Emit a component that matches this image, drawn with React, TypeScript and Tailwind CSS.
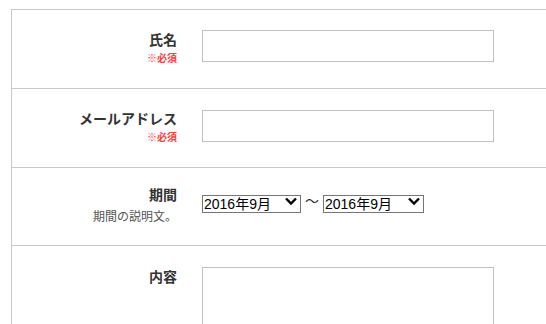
const SelectBox = ({ width }: { width: string }) => {
  return (
    <div className={`relative h-[18px] ${width}`}>
      <select className="h-full w-full appearance-none border border-[#767676] bg-white pl-[1px] text-[14px] leading-[16px] text-black outline-none">
        <option>2016年9月</option>
        <option>2016年10月</option>
      </select>
      <svg
        className="pointer-events-none absolute right-[4px] top-[5px]"
        width="12"
        height="9"
        viewBox="0 0 12 9"
        fill="none"
      >
        <path d="M1 1.5l5 5 5-5" stroke="#000" strokeWidth="2.4" />
      </svg>
    </div>
  );
};

const Label = ({ title, note, desc }: { title: string; note?: boolean; desc?: string }) => {
  return (
    <div className="w-[165px] shrink-0 text-right">
      <div className="text-[14px] font-bold leading-[20px] text-[#333]">{title}</div>
      {note && <div className="mt-[2px] text-[10px] font-bold leading-[14px] text-[#ff3b3b]">※必須</div>}
      {desc && <div className="mt-[4px] text-[12px] leading-[16px] text-[#555]">{desc}</div>}
    </div>
  );
};

export default function App() {
  return (
    <div
      className="h-[324px] overflow-hidden bg-white pl-[11px] pt-[9px]"
      style={{ fontFamily: '"Liberation Sans", "Noto Sans CJK JP", sans-serif' }}
    >
      <div className="border-l border-t border-[#c8c8c8]">
        {/* 氏名 */}
        <div className="flex h-[79px] border-b border-[#c8c8c8] pt-[20px]">
          <Label title="氏名" note />
          <input className="ml-[25px] h-[32px] w-[292px] border border-[#c0c0c0] bg-white px-2 text-[14px] outline-none" />
        </div>

        {/* メールアドレス */}
        <div className="flex h-[79px] border-b border-[#c8c8c8] pt-[20px]">
          <Label title="メールアドレス" note />
          <input className="ml-[25px] mt-[1px] h-[32px] w-[292px] border border-[#c0c0c0] bg-white px-2 text-[14px] outline-none" />
        </div>

        {/* 期間 */}
        <div className="flex h-[78px] border-b border-[#c8c8c8] pt-[17px]">
          <Label title="期間" desc="期間の説明文。" />
          <div className="ml-[25px] mt-[7px] flex h-[18px] items-center">
            <SelectBox width="w-[99px]" />
            <span className="mx-[4px] text-[14px] leading-[18px] text-[#333]">〜</span>
            <SelectBox width="w-[101px]" />
          </div>
        </div>

        {/* 内容 */}
        <div className="flex h-[120px] pt-[21px]">
          <Label title="内容" />
          <textarea className="ml-[25px] h-[100px] w-[292px] resize-none border border-[#c0c0c0] bg-white px-2 text-[14px] outline-none" />
        </div>
      </div>
    </div>
  );
}
